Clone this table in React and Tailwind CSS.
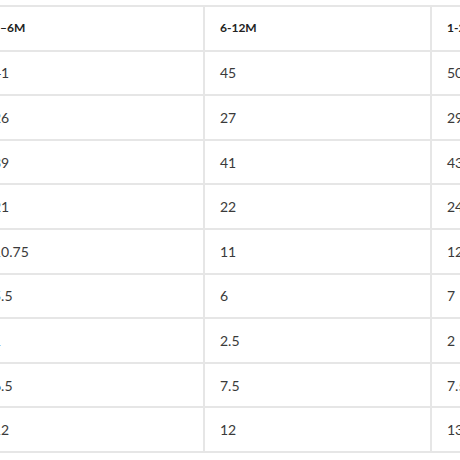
import React from 'react';

const headers = ['3–6M', '6-12M', '1-2Y'];

const rows = [
    ['41', '45', '50'],
    ['26', '27', '29'],
    ['39', '41', '43'],
    ['21', '22', '24'],
    ['10.75', '11', '12'],
    ['5.5', '6', '7'],
    ['1', '2.5', '2'],
    ['6.5', '7.5', '7.5'],
    ['12', '12', '13'],
];

const Cell = ({ children, head }) => (
    <div
        className={`w-[227px] shrink-0 flex items-center pl-[15px] border-r-2 border-[#e6e6e6] ${
            head ? 'text-[12px] font-bold text-[#222]' : 'text-[14px] text-[#3a3a3a]'
        }`}
    >
        {children}
    </div>
);

const App = () => {
    return (
        <div className="w-[460px] h-[460px] overflow-hidden bg-white font-['Lato',sans-serif]">
            <div className="-ml-[24px] mt-[5px] w-max border-t-2 border-l-2 border-[#e6e6e6]">
                <div className="flex h-[44.6px] border-b-2 border-[#e6e6e6]">
                    {headers.map((h) => (
                        <Cell key={h} head>
                            {h}
                        </Cell>
                    ))}
                </div>
                {rows.map((row, i) => (
                    <div key={i} className="flex h-[44.6px] border-b-2 border-[#e6e6e6]">
                        {row.map((v, j) => (
                            <Cell key={j}>{v}</Cell>
                        ))}
                    </div>
                ))}
            </div>
        </div>
    );
};

export default App;
